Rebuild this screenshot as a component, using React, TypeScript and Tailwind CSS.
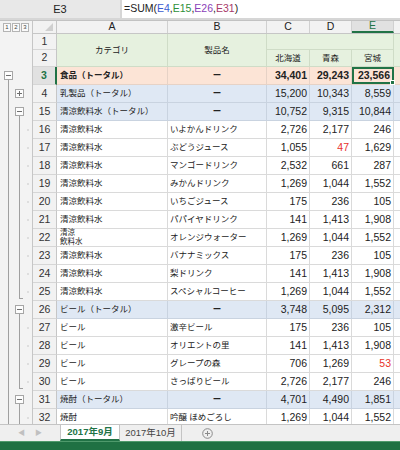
import React from 'react';

type OL = { l1: 'start' | 'line'; l2?: 'plus' | 'start' | 'line' | 'end'; dot?: boolean };
type Row = {
  n: number;
  a: string;
  b: string;
  c: string;
  d: string;
  e: string;
  kind: 'top' | 'total' | 'item';
  red?: 'd' | 'e';
  ol: OL;
  wrapA?: boolean;
};

const item = (l2: 'line' | 'end' = 'line'): OL => ({ l1: 'line', l2, dot: true });

const rows: Row[] = [
  { n: 3, a: '食品（トータル）', b: 'ー', c: '34,401', d: '29,243', e: '23,566', kind: 'top', ol: { l1: 'start' } },
  { n: 4, a: '乳製品（トータル）', b: 'ー', c: '15,200', d: '10,343', e: '8,559', kind: 'total', ol: { l1: 'line', l2: 'plus' } },
  { n: 15, a: '清涼飲料水（トータル）', b: 'ー', c: '10,752', d: '9,315', e: '10,844', kind: 'total', ol: { l1: 'line', l2: 'start' } },
  { n: 16, a: '清涼飲料水', b: 'いよかんドリンク', c: '2,726', d: '2,177', e: '246', kind: 'item', ol: item() },
  { n: 17, a: '清涼飲料水', b: 'ぶどうジュース', c: '1,055', d: '47', e: '1,629', kind: 'item', red: 'd', ol: item() },
  { n: 18, a: '清涼飲料水', b: 'マンゴードリンク', c: '2,532', d: '661', e: '287', kind: 'item', ol: item() },
  { n: 19, a: '清涼飲料水', b: 'みかんドリンク', c: '1,269', d: '1,044', e: '1,552', kind: 'item', ol: item() },
  { n: 20, a: '清涼飲料水', b: 'いちごジュース', c: '175', d: '236', e: '105', kind: 'item', ol: item() },
  { n: 21, a: '清涼飲料水', b: 'パパイヤドリンク', c: '141', d: '1,413', e: '1,908', kind: 'item', ol: item() },
  { n: 22, a: '清涼飲料水', b: 'オレンジウォーター', c: '1,269', d: '1,044', e: '1,552', kind: 'item', ol: item(), wrapA: true },
  { n: 23, a: '清涼飲料水', b: 'バナナミックス', c: '175', d: '236', e: '105', kind: 'item', ol: item() },
  { n: 24, a: '清涼飲料水', b: '梨ドリンク', c: '141', d: '1,413', e: '1,908', kind: 'item', ol: item() },
  { n: 25, a: '清涼飲料水', b: 'スペシャルコーヒー', c: '1,269', d: '1,044', e: '1,552', kind: 'item', ol: item('end') },
  { n: 26, a: 'ビール（トータル）', b: 'ー', c: '3,748', d: '5,095', e: '2,312', kind: 'total', ol: { l1: 'line', l2: 'start' } },
  { n: 27, a: 'ビール', b: '激辛ビール', c: '175', d: '236', e: '105', kind: 'item', ol: item() },
  { n: 28, a: 'ビール', b: 'オリエントの里', c: '141', d: '1,413', e: '1,908', kind: 'item', ol: item() },
  { n: 29, a: 'ビール', b: 'グレープの森', c: '706', d: '1,269', e: '53', kind: 'item', red: 'e', ol: item() },
  { n: 30, a: 'ビール', b: 'さっぱりビール', c: '2,726', d: '2,177', e: '246', kind: 'item', ol: item('end') },
  { n: 31, a: '焼酎（トータル）', b: 'ー', c: '4,701', d: '4,490', e: '1,851', kind: 'total', ol: { l1: 'line', l2: 'start' } },
  { n: 32, a: '焼酎', b: '吟醸 ほめごろし', c: '1,269', d: '1,044', e: '1,552', kind: 'item', ol: item() },
];

const Box = ({ x, plus }: { x: number; plus?: boolean }) => (
  <g>
    <rect x={x + 0.5} y={4.5} width={8} height={8} fill="#fdfdfd" stroke="#a6a6a6" />
    <line x1={x + 2} y1={8.5} x2={x + 7} y2={8.5} stroke="#6f6f6f" />
    {plus && <line x1={x + 4.5} y1={6} x2={x + 4.5} y2={11} stroke="#6f6f6f" />}
  </g>
);

const Outline = ({ ol }: { ol: OL }) => (
  <svg width="33" height="18" className="block">
    {ol.l1 === 'start' ? (
      <>
        <line x1={8.5} y1={12.5} x2={8.5} y2={18} stroke="#a0a0a0" />
        <Box x={4} />
      </>
    ) : (
      <line x1={8.5} y1={0} x2={8.5} y2={18} stroke="#a0a0a0" />
    )}
    {ol.l2 === 'plus' && <Box x={15} plus />}
    {ol.l2 === 'start' && (
      <>
        <line x1={19.5} y1={12.5} x2={19.5} y2={18} stroke="#a0a0a0" />
        <Box x={15} />
      </>
    )}
    {ol.l2 === 'line' && <line x1={19.5} y1={0} x2={19.5} y2={18} stroke="#a0a0a0" />}
    {ol.l2 === 'end' && (
      <>
        <line x1={19.5} y1={0} x2={19.5} y2={16} stroke="#a0a0a0" />
        <line x1={19} y1={15.5} x2={23} y2={15.5} stroke="#a0a0a0" />
      </>
    )}
    {ol.dot && <rect x={27.5} y={8.5} width={1} height={1} fill="#a0a0a0" />}
  </svg>
);

const DataRow = ({ r }: { r: Row }) => {
  const bg = r.kind === 'top' ? 'bg-[#fce4d6]' : r.kind === 'total' ? 'bg-[#dfe8f4]' : 'bg-white';
  const line = r.kind === 'total' ? 'border-[#c9d3e0]' : r.kind === 'top' ? 'border-[#e6d2c6]' : 'border-[#dadada]';
  const weight = r.kind === 'top' ? 'font-bold' : 'font-normal';
  const num = `text-right pr-[2px] text-[10.5px] ${weight}`;
  return (
    <div className="flex h-[18px]">
      <div className="w-[33px] shrink-0 bg-[#f3f3f3] border-r border-[#c6c6c6]">
        <Outline ol={r.ol} />
      </div>
      <div
        className={`w-[24px] shrink-0 flex items-center justify-center text-[10.5px] border-b border-[#d6d6d6] ${
          r.n === 3 ? 'bg-[#e1e1e1] text-[#217346] font-bold border-r-2 border-r-[#217346]' : 'bg-[#f2f2f2] text-[#333] border-r border-r-[#c6c6c6]'
        }`}
      >
        {r.n}
      </div>
      <div className={`flex flex-1 border-b ${line} ${bg}`}>
        <div className={`w-[111px] shrink-0 flex items-center pl-[3px] text-[8.5px] text-[#222] border-r ${line} ${weight}`}>
          {r.wrapA ? (
            <div className="flex flex-col leading-[8.5px] text-[7.5px]">
              <span>清涼</span>
              <span>飲料水</span>
            </div>
          ) : (
            r.a
          )}
        </div>
        <div
          className={`w-[99px] shrink-0 flex items-center text-[8.5px] text-[#222] border-r ${line} ${
            r.b === 'ー' ? 'justify-center font-bold' : 'pl-[2px]'
          }`}
        >
          {r.b}
        </div>
        <div className={`w-[43px] shrink-0 flex items-center justify-end border-r ${line} ${num}`}>{r.c}</div>
        <div className={`w-[42px] shrink-0 flex items-center justify-end border-r ${line} ${num} ${r.red === 'd' ? 'text-[#e8322a]' : ''}`}>
          {r.d}
        </div>
        <div
          className={`relative w-[42px] shrink-0 flex items-center justify-end ${num} ${r.red === 'e' ? 'text-[#e8322a]' : ''} ${
            r.n === 3 ? 'border-2 border-[#217346] pr-[1px]' : `border-r ${line}`
          }`}
        >
          {r.e}
          {r.n === 3 && <span className="absolute -right-[3px] -bottom-[3px] w-[5px] h-[5px] bg-[#217346] border border-white" />}
        </div>
        <div className="flex-1" />
      </div>
    </div>
  );
};

export default function App() {
  return (
    <div className="w-[400px] h-[450px] overflow-hidden flex flex-col bg-white text-[#222] font-['Liberation_Sans','Noto_Sans_CJK_JP',sans-serif]">
      {/* formula bar */}
      <div className="flex h-[21px] shrink-0 bg-[#d6d6d6] border-b border-[#c2c2c2] pb-[2px]">
        <div className="w-[120px] flex items-center justify-center bg-[#e8e8e8] text-[11px] text-[#222]">E3</div>
        <div className="flex-1 ml-[2px] bg-white flex items-center pl-[2px] text-[10.5px] text-[#222]">
          <span>=SUM(</span>
          <span className="text-[#3b5bd0]">E4</span>
          <span>,</span>
          <span className="text-[#2f8f3a]">E15</span>
          <span>,</span>
          <span className="text-[#8a3fb8]">E26</span>
          <span>,</span>
          <span className="text-[#a83a6a]">E31</span>
          <span>)</span>
        </div>
      </div>

      {/* column header */}
      <div className="flex h-[13px] shrink-0 text-[10.5px]">
        <div className="w-[33px] shrink-0 bg-[#f3f3f3] border-r border-[#c6c6c6] flex items-center gap-[1px] pl-[3px]">
          {['1', '2', '3'].map((l) => (
            <span key={l} className="w-[8px] h-[9px] flex items-center justify-center border border-[#b4b4b4] bg-[#fafafa] text-[6px] text-[#444]">
              {l}
            </span>
          ))}
        </div>
        <div className="relative w-[24px] shrink-0 bg-[#f2f2f2] border-r border-b border-[#c6c6c6]">
          <svg width="10" height="10" className="absolute right-[2px] bottom-[1px]">
            <polygon points="9,1 9,9 1,9" fill="#cfcfcf" />
          </svg>
        </div>
        <div className="flex flex-1 bg-[#f2f2f2] border-b border-[#c6c6c6]">
          <div className="w-[111px] shrink-0 flex items-center justify-center border-r border-[#d0d0d0]">A</div>
          <div className="w-[99px] shrink-0 flex items-center justify-center border-r border-[#d0d0d0]">B</div>
          <div className="w-[43px] shrink-0 flex items-center justify-center border-r border-[#d0d0d0]">C</div>
          <div className="w-[42px] shrink-0 flex items-center justify-center border-r border-[#d0d0d0]">D</div>
          <div className="w-[42px] shrink-0 flex items-center justify-center border-r border-[#d0d0d0] bg-[#e1e1e1] text-[#217346] border-b-2 border-b-[#217346]">
            E
          </div>
          <div className="flex-1" />
        </div>
      </div>

      {/* rows 1-2 header block */}
      <div className="flex h-[33px] shrink-0">
        <div className="w-[33px] shrink-0 bg-[#f3f3f3] border-r border-[#c6c6c6]" />
        <div className="w-[24px] shrink-0 flex flex-col bg-[#f2f2f2] border-r border-[#c6c6c6] text-[10.5px] text-[#333]">
          <div className="h-[16px] flex items-center justify-center border-b border-[#d6d6d6]">1</div>
          <div className="h-[17px] flex items-center justify-center border-b border-[#d6d6d6]">2</div>
        </div>
        <div className="flex flex-1 bg-[#e6f1df] text-[8.5px] text-[#222]">
          <div className="w-[111px] shrink-0 flex items-center justify-center border-r border-b border-[#cfdcc7]">カテゴリ</div>
          <div className="w-[99px] shrink-0 flex items-center justify-center border-r border-b border-[#cfdcc7]">製品名</div>
          <div className="w-[127px] shrink-0 flex flex-col">
            <div className="h-[16px] border-b border-r border-[#cfdcc7]" />
            <div className="flex h-[17px]">
              <div className="w-[43px] flex items-center justify-center border-r border-b border-[#cfdcc7]">北海道</div>
              <div className="w-[42px] flex items-center justify-center border-r border-b border-[#cfdcc7]">青森</div>
              <div className="w-[42px] flex items-center justify-center border-r border-b border-[#cfdcc7]">宮城</div>
            </div>
          </div>
          <div className="flex-1 border-b border-[#cfdcc7]" />
        </div>
      </div>

      {/* data rows */}
      <div className="flex-1 overflow-hidden">
        {rows.map((r) => (
          <DataRow key={r.n} r={r} />
        ))}
      </div>

      {/* sheet tabs */}
      <div className="flex h-[17px] shrink-0 bg-[#efefef] border-t border-[#c4c4c4] text-[9.5px]">
        <div className="w-[60px] flex items-center justify-center gap-[10px] text-[7px] text-[#c0c0c0]">
          <span>◀</span>
          <span>▶</span>
        </div>
        <div className="w-[60px] flex items-center justify-center bg-white border-x border-[#c4c4c4] border-b-2 border-b-[#217346] text-[#217346] font-bold">
          2017年9月
        </div>
        <div className="w-[62px] flex items-center justify-center border-r border-[#c4c4c4] text-[#444]">2017年10月</div>
        <div className="flex items-center pl-[20px]">
          <svg width="11" height="11" viewBox="0 0 11 11">
            <circle cx="5.5" cy="5.5" r="4.8" fill="none" stroke="#8a8a8a" strokeWidth="1" />
            <line x1="5.5" y1="3" x2="5.5" y2="8" stroke="#8a8a8a" />
            <line x1="3" y1="5.5" x2="8" y2="5.5" stroke="#8a8a8a" />
          </svg>
        </div>
      </div>

      {/* status bar */}
      <div className="h-[9px] shrink-0 bg-[#1f7143] border-t border-[#4f9a6c]" />
    </div>
  );
}
